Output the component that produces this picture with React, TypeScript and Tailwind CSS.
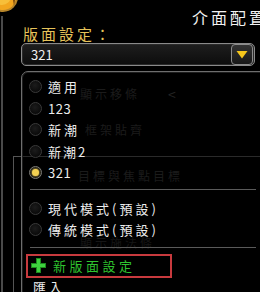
import React from 'react'

const cjk = "font-['Noto_Sans_CJK_TC','Noto_Sans',sans-serif]"

function Radio({ checked }: { checked?: boolean }) {
  return (
    <span
      className={`w-[13px] h-[13px] rounded-full border flex items-center justify-center shrink-0 bg-[radial-gradient(circle_at_45%_40%,#1c1c1c,#040404)] ${
        checked ? 'border-[#7a7a7a]' : 'border-[#3a3a3a]'
      }`}
    >
      {checked && <span className="w-[7px] h-[7px] rounded-full bg-[#f4d152] shadow-[0_0_3px_#f4d152]" />}
    </span>
  )
}

function Item({ label, checked, track }: { label: string; checked?: boolean; track: string }) {
  return (
    <div className="h-[21.5px] flex items-center pl-[7px] gap-[6px]">
      <Radio checked={checked} />
      <span className={`text-[13px] leading-none text-[#ececec] ${track}`}>{label}</span>
    </div>
  )
}

export default function App() {
  const layouts = [
    { label: '適用', track: 'tracking-[3px]' },
    { label: '123', track: 'tracking-[0.5px]' },
    { label: '新潮', track: 'tracking-[3px]' },
    { label: '新潮2', track: 'tracking-[2px]' },
    { label: '321', track: 'tracking-[0.5px]', checked: true },
  ]

  return (
    <div className={`relative w-[260px] h-[292px] bg-black overflow-hidden flex ${cjk}`}>
      {/* gold badge peeking in the corner */}
      <svg className="absolute left-0 top-0" width="22" height="16" viewBox="0 0 22 16">
        <circle cx="3" cy="-3" r="15" fill="#b8862a" />
        <circle cx="3" cy="-3" r="13" fill="#f2a61e" />
        <circle cx="2" cy="-4" r="9" fill="#f7bf3a" />
        <path d="M13 0 L15 0 L14 6 Z" fill="#7a4a10" />
      </svg>

      {/* left frame edge */}
      <div className="w-[4px] pt-[16px] shrink-0">
        <div className="h-full w-[2px] ml-[1px] bg-[#4a4a4a]" />
      </div>

      <div className="flex-1 flex flex-col">
        {/* header */}
        <div className="h-[26px] pl-[188px] pt-[5px] whitespace-nowrap">
          <span className="text-[16px] leading-[18px] tracking-[3px] text-[#f2f2f2]">介面配置</span>
        </div>

        {/* label */}
        <div className="h-[15px] ml-[19px] text-[15px] leading-[15px] tracking-[3px] text-[#e6c35a]">版面設定：</div>

        {/* select */}
        <div className="mt-[2px] ml-[17px] w-[234px] h-[24px] rounded-[5px] border border-[#8a8a8a] bg-[linear-gradient(#1e1e1e,#0c0c0c)] shadow-[inset_0_0_0_1px_#2a2a2a] flex items-center justify-between pl-[9px] pr-[1px]">
          <span className="text-[13px] leading-none text-[#f0f0f0]">321</span>
          <div className="w-[22px] h-[21px] rounded-[4px] border border-[#8c8c8c] bg-[linear-gradient(#333,#181818)] flex items-center justify-center">
            <svg width="12" height="9" viewBox="0 0 12 9">
              <polygon points="0.5,1 11.5,1 6,8.5" fill="#f6c71c" />
            </svg>
          </div>
        </div>

        {/* settings panel behind the open menu */}
        <div className="relative flex-1">
          <div className="flex flex-col text-[12px] leading-[14px] tracking-[3px] text-[#363636]">
            <div className="mt-[21px] pl-[76px] flex items-center">
              <span>顯示移條</span>
              <span className="ml-[28px] text-[#4a4a4a] text-[14px]">&lt;</span>
            </div>
            <div className="mt-[22px] pl-[81px]">框架貼齊</div>
            <div className="mt-[19px] ml-[9px] h-[200px] border-t border-l border-[#555] pt-[12px]">
              <div className="pl-[64px]">目標與焦點目標</div>
              <div className="mt-[53px] pl-[66px] text-[#2c2c2c]">顯示施法條</div>
            </div>
          </div>

          {/* open dropdown menu */}
          <div className="absolute left-[17px] right-[1px] top-[5px] -bottom-[10px] rounded-t-[7px] border border-[#6e6e6e] bg-black/50 shadow-[inset_0_0_0_1px_#1e1e1e] pt-[4px] flex flex-col">
            {layouts.map((l) => (
              <Item key={l.label} label={l.label} track={l.track} checked={l.checked} />
            ))}

            <div className="mt-[5px] ml-[8px] mr-[10px] h-px bg-[#5a5a5a]" />

            <div className="mt-[8px]">
              <Item label="現代模式(預設)" track="tracking-[3px]" />
              <Item label="傳統模式(預設)" track="tracking-[3px]" />
            </div>

            <div className="mt-[6px] ml-[8px] mr-[10px] h-px bg-[#5a5a5a]" />

            <div className="mt-[6px] ml-[4px] w-[146px] h-[24px] border-2 border-[#c83a3e] flex items-center pl-[3px] gap-[7px]">
              <svg width="15" height="15" viewBox="0 0 15 15">
                <path d="M5 0 H10 V5 H15 V10 H10 V15 H5 V10 H0 V5 H5 Z" fill="#1f8a1f" />
                <path d="M6 1 H9 V6 H14 V9 H9 V14 H6 V9 H1 V6 H6 Z" fill="#3fd13f" />
              </svg>
              <span className="text-[13px] leading-none tracking-[3.5px] text-[#2fc42f]">新版面設定</span>
            </div>

            <div className="pl-[11px] pt-[2px] text-[13px] leading-[14px] tracking-[3px] text-[#ececec]">匯入</div>
          </div>
        </div>
      </div>
    </div>
  )
}
